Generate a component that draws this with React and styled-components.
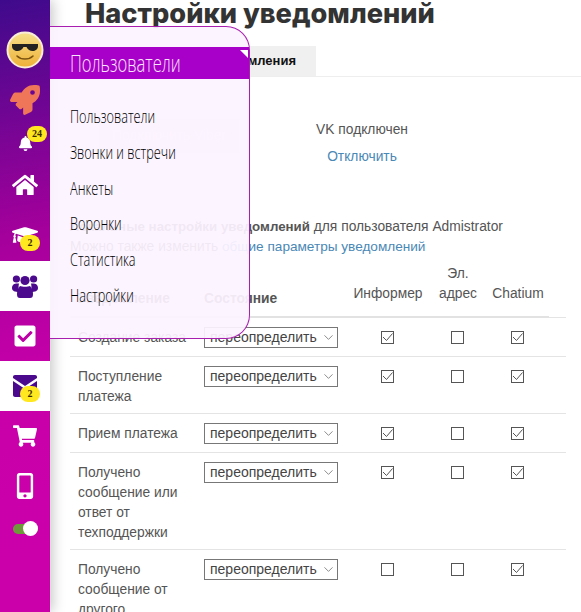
import styled, { createGlobalStyle } from "styled-components";
import {
  FaRocket,
  FaBell,
  FaHome,
  FaGraduationCap,
  FaCheckSquare,
  FaShoppingCart,
  FaMobileAlt,
} from "react-icons/fa";
import { ChevronDown } from "lucide-react";

const GlobalStyle = createGlobalStyle`
  html, body {
    margin: 0;
    padding: 0;
    height: 612px;
    overflow: hidden;
    background: #fff;
  }
`;

const Page = styled.div`
  position: relative;
  display: flex;
  width: 581px;
  height: 612px;
  overflow: hidden;
  font-family: "Liberation Sans", Arial, sans-serif;
  font-size: 13.8px;
  line-height: 20px;
  color: #555;
`;

const Sidebar = styled.nav`
  position: relative;
  z-index: 2;
  flex: 0 0 50px;
  display: flex;
  flex-direction: column;
  align-items: stretch;
  padding-top: 25px;
  background: linear-gradient(170deg, #3f0a8c 0%, #a4009b 38%, #c800aa 62%, #cc00aa 100%);
  box-shadow: 3px 0 12px rgba(0, 0, 0, 0.22);
`;

const Avatar = styled.div`
  height: 50px;
  display: flex;
  align-items: center;
  justify-content: center;
`;

const SideItem = styled.div`
  position: relative;
  height: ${(p) => p.$h || 50}px;
  display: flex;
  align-items: center;
  justify-content: center;
  font-size: ${(p) => p.$size || 26}px;
  color: ${(p) => (p.$active ? "#4b0a8e" : p.$color || "#fff")};
  background: ${(p) => (p.$active ? "#fff" : "transparent")};
`;

const Badge = styled.span`
  position: absolute;
  left: ${(p) => p.$x}px;
  top: ${(p) => p.$y}px;
  width: 20px;
  height: 16px;
  border-radius: 10px;
  background: #ffe81f;
  color: #3a2a00;
  font-family: "Liberation Serif", serif;
  font-size: 10px;
  font-weight: 700;
  line-height: 16px;
  text-align: center;
`;

const Toggle = styled.div`
  position: relative;
  width: 25px;
  height: 10px;
  margin: 13px 0 0 13px;
  border-radius: 5px;
  background: #6f9a3c;

  &::after {
    content: "";
    position: absolute;
    right: 0;
    top: -3px;
    width: 15px;
    height: 15px;
    border-radius: 50%;
    background: #fff;
  }
`;

const Main = styled.main`
  flex: 1;
  min-width: 0;
  display: flex;
  flex-direction: column;
`;

const Title = styled.h1`
  margin: -4px 0 0 35px;
  font-family: "Inter", "Open Sans", sans-serif;
  font-size: 27.2px;
  line-height: 36px;
  font-weight: 800;
  color: #333;
  white-space: nowrap;
`;

const Tabs = styled.div`
  display: flex;
  margin-top: 14px;
  padding-left: 146px;
  border-bottom: 1px solid #eee;
`;

const Tab = styled.div`
  height: 30px;
  width: 100px;
  padding-right: 20px;
  background: #f0f0f0;
  color: #111;
  font-weight: 700;
  font-size: 13px;
  line-height: 30px;
  text-align: right;
`;

const ConnectRow = styled.div`
  display: flex;
  margin-top: 42px;
  padding-left: 49px;
`;

const ViberButton = styled.div`
  width: 140px;
  height: 34px;
  background: #eee;
  color: #fff;
  line-height: 34px;
  text-align: center;
`;

const VkBox = styled.div`
  width: 148px;
  margin-left: 49px;
  padding-top: 1px;
  text-align: center;
`;

const Link = styled.a`
  color: #4a88b5;
  text-decoration: none;
`;

const VkLink = styled(Link)`
  display: block;
  margin-top: 7px;
`;

const Intro = styled.p`
  margin: 50px 0 0 20px;
  white-space: nowrap;

  b {
    font-size: 13.3px;
  }

  a {
    font-size: 13.6px;
  }
`;

const NotifyTable = styled.table`
  width: 496px;
  margin: 0 0 0 20px;
  border-collapse: collapse;
  table-layout: fixed;
`;

const HeadCell = styled.th`
  padding: 7px 2px 12px 4px;
  font-weight: 400;
  text-align: center;
  vertical-align: bottom;
  border-bottom: 2px solid #e2e2e2;
`;

const BoldHead = styled(HeadCell)`
  padding: 7px 8px 7px;
  font-weight: 700;
  text-align: left;
`;

const SpareHead = styled.th`
  padding: 0;
  border-bottom: 1px solid #e4e4e4;
`;

const Cell = styled.td`
  padding: 10px 8px 6px;
  vertical-align: top;
  border-bottom: 1px solid #e4e4e4;
`;

const CheckCell = styled(Cell)`
  padding: 13px 8px 5px;
  text-align: center;
`;

const Select = styled.div`
  position: relative;
  box-sizing: border-box;
  width: 134px;
  height: 21px;
  margin: -1px 0 1px;
  padding-left: 5px;
  border: 1px solid #777;
  line-height: 19px;
  font-size: 14px;
  white-space: nowrap;
  color: #444;

  svg {
    position: absolute;
    right: 1px;
    top: 2px;
    color: #666;
  }
`;

const Box = styled.span`
  display: inline-flex;
  box-sizing: border-box;
  width: 13px;
  height: 13px;
  border: 1px solid #555;
  vertical-align: top;
  align-items: center;
  justify-content: center;
`;

const Popup = styled.div`
  position: absolute;
  z-index: 3;
  left: 50px;
  top: 26px;
  box-sizing: border-box;
  width: 200px;
  height: 313px;
  padding-top: 20px;
  border: 1px solid #a81fb0;
  border-left: 0;
  border-radius: 0 24px 24px 0;
  background: rgba(252, 243, 255, 0.93);
`;

const PopupHeader = styled.div`
  position: relative;
  height: 32px;
  padding-left: 20px;
  background: #a800c8;
  color: #f6e6fb;
  font-family: "Open Sans", "Liberation Sans", sans-serif;
  font-weight: 300;
  font-size: 23px;
  line-height: 32px;

  &::after {
    content: "";
    position: absolute;
    right: 1px;
    top: 3px;
    border-style: solid;
    border-width: 0 8px 8px 0;
    border-color: transparent #fff transparent transparent;
  }
`;

const Narrow = styled.span`
  display: inline-block;
  transform: scaleX(${(p) => p.$scale});
  transform-origin: left center;
  white-space: nowrap;
`;

const PopupList = styled.div`
  display: flex;
  flex-direction: column;
  padding: 25px 0 0 20px;
`;

const PopupItem = styled.div`
  height: 35.8px;
  color: #000;
  font-family: "Open Sans", "Liberation Sans", sans-serif;
  font-weight: 300;
  font-size: 19px;
  line-height: 24px;
`;

const rows = [
  { name: "Создание заказа", checks: [1, 0, 1] },
  { name: "Поступление платежа", checks: [1, 0, 1] },
  { name: "Прием платежа", checks: [1, 0, 1] },
  { name: "Получено сообщение или ответ от техподдержки", checks: [1, 0, 1] },
  { name: "Получено сообщение от другого пользователя", checks: [0, 0, 1] },
];

const menu = ["Пользователи", "Звонки и встречи", "Анкеты", "Воронки", "Статистика", "Настройки"];

function Smiley() {
  return (
    <svg width="38" height="38" viewBox="0 0 38 38">
      <defs>
        <linearGradient id="face" x1="0" y1="0" x2="0" y2="1">
          <stop offset="0" stopColor="#f6e08c" />
          <stop offset="1" stopColor="#eeb036" />
        </linearGradient>
      </defs>
      <circle cx="19" cy="19" r="17.5" fill="url(#face)" stroke="#f9ecd8" strokeWidth="2" />
      <path d="M6 13 H32 V15 C32 21 23 22 20.5 16 H17.5 C15 22 6 21 6 15 Z" fill="#222" />
      <path d="M11 25 C15 29 23 29 27 25" fill="none" stroke="#7a5410" strokeWidth="1.6" strokeLinecap="round" />
    </svg>
  );
}

function UsersIcon() {
  return (
    <svg width="26" height="26" viewBox="0 0 26 26" fill="currentColor">
      <circle cx="13" cy="7.5" r="4.6" />
      <circle cx="4.4" cy="6" r="3.6" />
      <circle cx="21.6" cy="6" r="3.6" />
      <path d="M0 15 C0 11 3 10 7 10.5 C6 14 7 17 7 19 C3 19 0 18 0 15 Z" />
      <path d="M26 15 C26 11 23 10 19 10.5 C20 14 19 17 19 19 C23 19 26 18 26 15 Z" />
      <path d="M8 13 C10 14 16 14 18 13 C20 15 21 18 21 21 C21 24 20 25 18 25 H8 C6 25 5 24 5 21 C5 18 6 15 8 13 Z" />
    </svg>
  );
}

function MailIcon() {
  return (
    <svg width="24" height="22" viewBox="0 0 24 22" fill="currentColor">
      <path d="M2 0 H22 C23.2 0 24 .8 24 2 V3 L12 11 L0 3 V2 C0 .8 .8 0 2 0 Z" />
      <path d="M0 6 L12 14 L24 6 V20 C24 21 23 22 22 22 H2 C1 22 0 21 0 20 Z" />
    </svg>
  );
}

function CheckBox({ on }) {
  return (
    <Box>
      {on ? (
        <svg width="11" height="11" viewBox="0 0 11 11">
          <path d="M1 5 L4.5 8.5 L10.5 1.5" fill="none" stroke="#555" strokeWidth="1" />
        </svg>
      ) : null}
    </Box>
  );
}

export default function App() {
  return (
    <Page>
      <GlobalStyle />
      <Sidebar>
        <Avatar>
          <Smiley />
        </Avatar>
        <SideItem $color="#f0765a" $size={30} $h={50}>
          <FaRocket />
        </SideItem>
        <SideItem $size={15} $h={36}>
          <FaBell />
          <Badge $x={27} $y={1}>24</Badge>
        </SideItem>
        <SideItem $h={48}>
          <FaHome />
        </SideItem>
        <SideItem $h={52}>
          <FaGraduationCap />
          <Badge $x={20} $y={26}>2</Badge>
        </SideItem>
        <SideItem $active>
          <UsersIcon />
        </SideItem>
        <SideItem $size={24}>
          <FaCheckSquare />
        </SideItem>
        <SideItem $active>
          <MailIcon />
          <Badge $x={20} $y={25}>2</Badge>
        </SideItem>
        <SideItem $size={24}>
          <FaShoppingCart />
        </SideItem>
        <SideItem $size={26}>
          <FaMobileAlt />
        </SideItem>
        <Toggle />
      </Sidebar>

      <Main>
        <Title>Настройки уведомлений</Title>
        <Tabs>
          <Tab>Уведомления</Tab>
        </Tabs>
        <ConnectRow>
          <ViberButton>Подключить Viber</ViberButton>
          <VkBox>
            <div>VK подключен</div>
            <VkLink>Отключить</VkLink>
          </VkBox>
        </ConnectRow>
        <Intro>
          <b>Локальные настройки уведомлений</b> для пользователя Admistrator
          <br />
          Можно также изменить <Link>общие параметры уведомлений</Link>
        </Intro>
        <NotifyTable>
          <colgroup>
            <col style={{ width: 126 }} />
            <col style={{ width: 149 }} />
            <col style={{ width: 84 }} />
            <col style={{ width: 56 }} />
            <col style={{ width: 64 }} />
            <col style={{ width: 17 }} />
          </colgroup>
          <thead>
            <tr>
              <BoldHead as="th">Уведомление</BoldHead>
              <BoldHead as="th">Состояние</BoldHead>
              <HeadCell>Информер</HeadCell>
              <HeadCell>Эл. адрес</HeadCell>
              <HeadCell>Chatium</HeadCell>
              <SpareHead />
            </tr>
          </thead>
          <tbody>
            {rows.map((row) => (
              <tr key={row.name}>
                <Cell>{row.name}</Cell>
                <Cell>
                  <Select>
                    переопределить
                    <ChevronDown size={15} strokeWidth={1.2} />
                  </Select>
                </Cell>
                {row.checks.map((on, i) => (
                  <CheckCell key={i}>
                    <CheckBox on={on} />
                  </CheckCell>
                ))}
                <Cell />
              </tr>
            ))}
          </tbody>
        </NotifyTable>
      </Main>

      <Popup>
        <PopupHeader>
          <Narrow $scale={0.72}>Пользователи</Narrow>
        </PopupHeader>
        <PopupList>
          {menu.map((item) => (
            <PopupItem key={item}>
              <Narrow $scale={0.67}>{item}</Narrow>
            </PopupItem>
          ))}
        </PopupList>
      </Popup>
    </Page>
  );
}
